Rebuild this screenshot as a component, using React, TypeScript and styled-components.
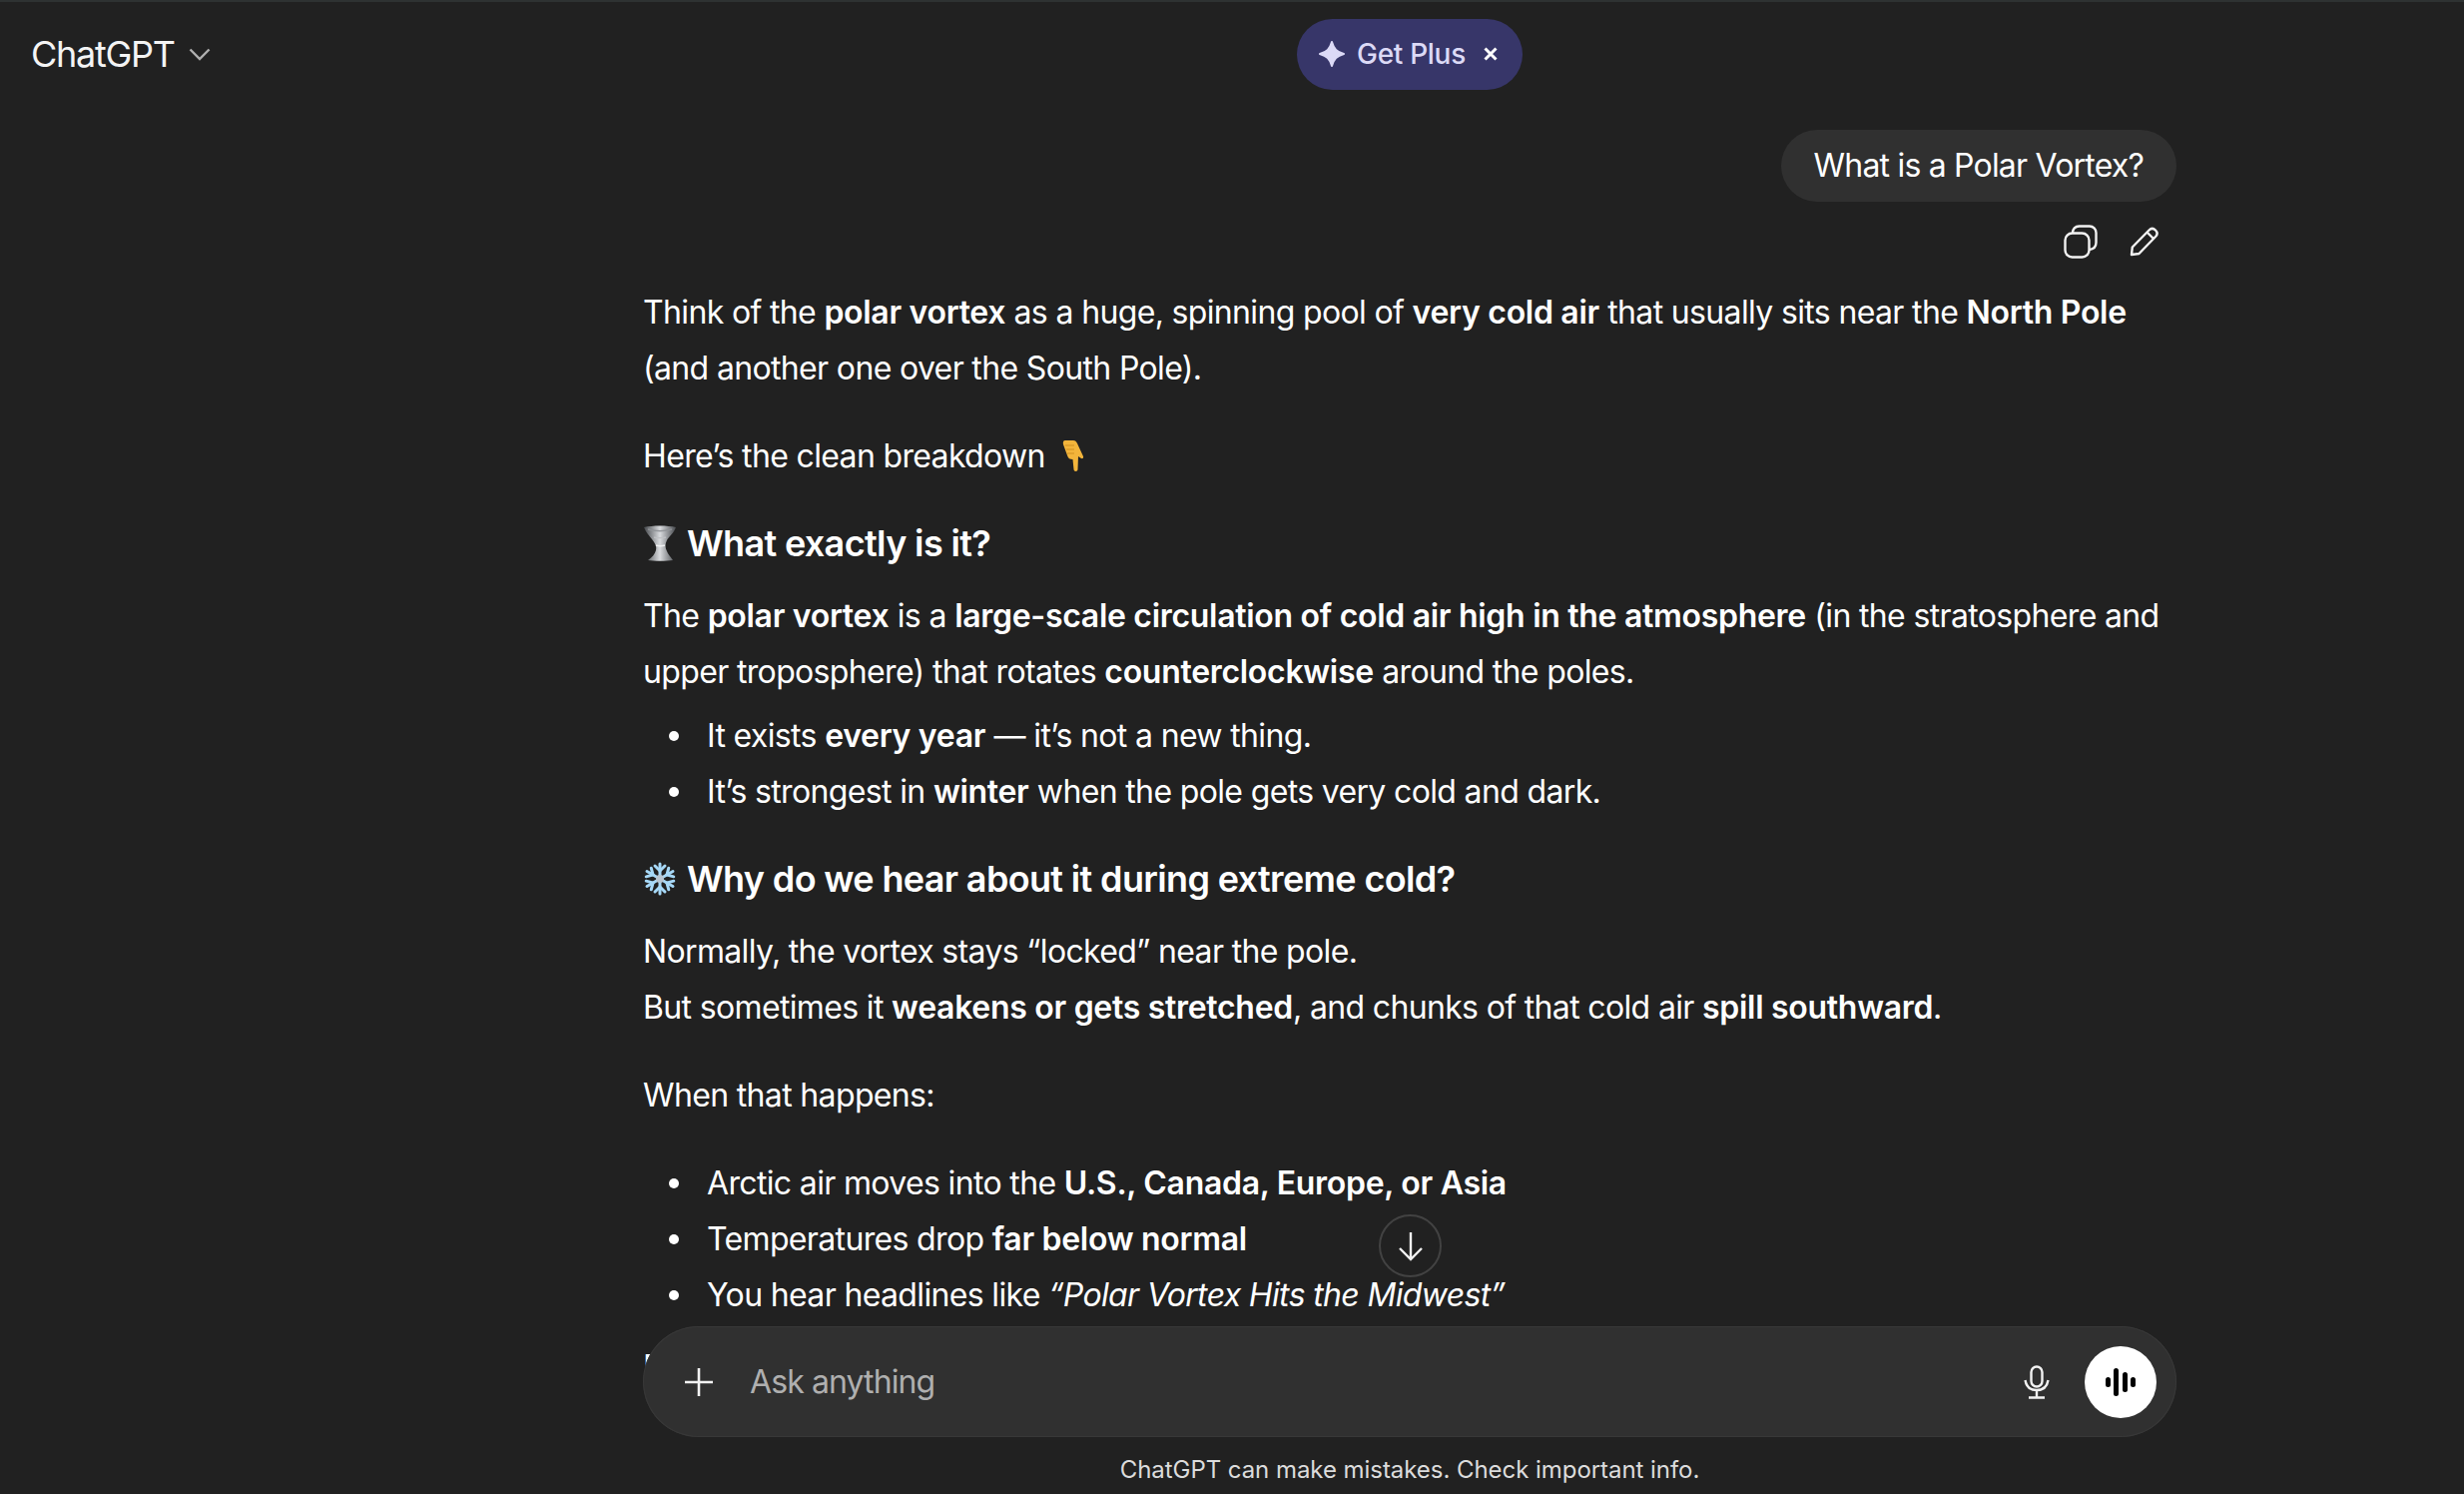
import styled, { createGlobalStyle } from "styled-components";

const Global = createGlobalStyle`
  html, body {
    margin: 0;
    padding: 0;
    background: #212121;
  }
  body {
    font-family: Inter, "Liberation Sans", sans-serif;
    color: #fff;
  }
  b {
    font-weight: 600;
    letter-spacing: -0.3px;
  }
`;

const Page = styled.div`
  position: relative;
  width: 2468px;
  height: 1496px;
  overflow: hidden;
  background: #212121;
  border-top: 2px solid #2e3232;
  box-sizing: border-box;
`;

const Header = styled.header`
  display: grid;
  grid-template-columns: 644px 1536px 288px;
  align-items: center;
  height: 104px;
`;

const Brand = styled.div`
  display: flex;
  align-items: center;
  gap: 14px;
  padding-left: 31px;
  font-size: 36px;
  letter-spacing: -1.3px;
  color: #f4f4f4;
`;

const PlusPill = styled.div`
  justify-self: center;
  display: flex;
  align-items: center;
  box-sizing: border-box;
  width: 226px;
  height: 71px;
  padding-left: 22px;
  border-radius: 36px;
  background: #373669;
  color: #dcdaf6;
  font-size: 28px;
  font-weight: 500;
  letter-spacing: -0.3px;
  gap: 12px;
`;

const PillClose = styled.svg`
  margin-left: 6px;
`;

const Thread = styled.main`
  display: flex;
  flex-direction: column;
  margin: 0 288px 0 644px;
  padding-top: 24px;
  letter-spacing: -0.65px;
`;

const UserBubble = styled.div`
  align-self: flex-end;
  height: 72px;
  padding: 0 33px;
  border-radius: 36px;
  background: #303030;
  font-size: 32px;
  letter-spacing: -0.8px;
  line-height: 72px;
`;

const MessageActions = styled.div`
  display: flex;
  justify-content: flex-end;
  align-items: center;
  gap: 32px;
  height: 83px;
  padding: 0 17px 4px 0;
  box-sizing: border-box;
`;

const Para = styled.p<{ $after?: number }>`
  margin: 0 0 ${(p) => p.$after ?? 32}px;
  font-size: 32px;
  line-height: 56px;
  color: #fff;
`;

const SectionTitle = styled.h3`
  display: flex;
  align-items: center;
  gap: 10px;
  margin: -1px 0 17px;
  font-size: 36px;
  line-height: 56px;
  font-weight: 600;
`;

const List = styled.ul<{ $after?: number }>`
  margin: 0 0 ${(p) => p.$after ?? 32}px;
  padding: 0 0 0 64px;
  list-style: none;
  font-size: 32px;
  line-height: 56px;
`;

const Item = styled.li`
  position: relative;

  &::before {
    content: "";
    position: absolute;
    left: -38px;
    top: 23px;
    width: 10px;
    height: 10px;
    border-radius: 50%;
    background: #fff;
  }
`;

const Emoji = styled.svg`
  flex: none;
`;

const InlineEmoji = styled.svg`
  margin-left: 17px;
  vertical-align: -5px;
`;

const ScrollDown = styled.button`
  position: absolute;
  left: 1381px;
  top: 1214px;
  display: flex;
  align-items: center;
  justify-content: center;
  width: 63px;
  height: 63px;
  padding: 0;
  border: 2px solid #424242;
  border-radius: 50%;
  background: #212121;
`;

const Dock = styled.div`
  position: absolute;
  left: 0;
  right: 0;
  bottom: 0;
  height: 168px;
  padding: 0 288px 0 644px;
  box-sizing: border-box;
  background: linear-gradient(#21212100 0, #21212100 60px, #212121 61px);
`;

const Composer = styled.div`
  display: flex;
  align-items: center;
  box-sizing: border-box;
  height: 111px;
  padding: 0 20px 0 41px;
  border-radius: 56px;
  background: #303030;
  box-shadow: inset 0 0 0 1px #383838;
`;

const Placeholder = styled.span`
  flex: 1;
  margin-left: 36px;
  font-size: 32px;
  letter-spacing: -0.9px;
  color: #afafaf;
`;

const VoiceButton = styled.div`
  display: flex;
  align-items: center;
  justify-content: center;
  width: 72px;
  height: 72px;
  margin-left: 35px;
  border-radius: 50%;
  background: #fff;
`;

const Disclaimer = styled.div`
  height: 57px;
  line-height: 66px;
  text-align: center;
  font-size: 24px;
  letter-spacing: -0.05px;
  color: #dcdcdc;
`;

const HandDown = () => (
  <InlineEmoji width="22" height="32" viewBox="0 0 22 32">
    <path
      d="M3 0h8c2 0 3 1 4 3l6 13c.5 1.500-.5 2.500-2 2l-3-2-.5 13c0 2.500-4 2.500-4 0l-1-10c-3 0-4.500-1-5.500-4L1 4C.5 2 1 0 3 0z"
      fill="#f3b53b"
    />
    <path d="M3 5h9M4 9h8M5 13h7" stroke="#cf8f22" strokeWidth="1.200" fill="none" />
  </InlineEmoji>
);

const Tornado = () => (
  <Emoji width="34" height="36" viewBox="0 0 34 36">
    <defs>
      <linearGradient id="tw" x1="0" x2="1" y1="0" y2="0">
        <stop offset="0" stopColor="#44474b" />
        <stop offset="0.5" stopColor="#d9dbde" />
        <stop offset="1" stopColor="#484b4f" />
      </linearGradient>
      <linearGradient id="tb" x1="0" x2="0" y1="0" y2="1">
        <stop offset="0" stopColor="#8b8e92" />
        <stop offset="1" stopColor="#f3f4f5" />
      </linearGradient>
    </defs>
    <path
      d="M1 2c8-2 24-2 32 0-2 6-7 9-9 13-2 4-2 7 0 11 1 3 4 6 6 9-6 1-20 1-25 0 4-3 7-6 8-10 1-4-1-7-4-11C6 10 3 7 1 2z"
      fill="url(#tw)"
    />
    <path d="M5 4c7 2 17 2 24 0M11 12c4 1 8 1 12 0M13 20c3 1 6 1 9 0" stroke="url(#tb)" strokeWidth="1.600" fill="none" />
  </Emoji>
);

const Snowflake = () => (
  <Emoji width="34" height="34" viewBox="0 0 34 34">
    <g stroke="#a6d8f7" strokeWidth="3" strokeLinecap="round" fill="none">
      {[0, 60, 120].map((a) => (
        <g key={a} transform={`rotate(${a} 17 17)`}>
          <path d="M17 2v30" />
          <path d="M12 4l5 5 5-5M12 30l5-5 5 5" />
        </g>
      ))}
    </g>
    <circle cx="17" cy="17" r="4" fill="#b9c6d2" />
  </Emoji>
);

export default function App() {
  return (
    <>
      <Global />
      <Page>
        <Header>
          <Brand>
            ChatGPT
            <svg width="22" height="13" viewBox="0 0 22 13">
              <path d="M1.500 1.500 11 11l9.500-9.500" stroke="#afafaf" strokeWidth="2.400" fill="none" />
            </svg>
          </Brand>
          <PlusPill>
            <svg width="26" height="26" viewBox="0 0 26 26">
              <path
                d="M13 1c2 7 5 10 12 12-7 2-10 5-12 12-2-7-5-10-12-12 7-2 10-5 12-12z"
                fill="#dcdaf6"
                stroke="#dcdaf6"
                strokeWidth="2"
                strokeLinejoin="round"
              />
            </svg>
            Get Plus
            <PillClose width="14" height="14" viewBox="0 0 14 14">
              <path d="M1.500 1.500l11 11M12.500 1.500l-11 11" stroke="#fff" strokeWidth="3" />
            </PillClose>
          </PlusPill>
        </Header>
        <Thread>
          <UserBubble>What is a Polar Vortex?</UserBubble>
          <MessageActions>
            <svg width="34" height="34" viewBox="0 0 34 34" fill="none" stroke="#f2f2f2" strokeWidth="2.400">
              <rect x="1.500" y="8.500" width="24" height="24" rx="7" />
              <path d="M9 8.500V8c0-3.500 2.500-6.500 6.500-6.500H26c3.500 0 6.500 3 6.500 6.500v10c0 4-2.500 6.500-7 7" />
            </svg>
            <svg width="30" height="30" viewBox="0 0 30 30" fill="none" stroke="#f2f2f2" strokeWidth="2.400" strokeLinejoin="round">
              <path d="M2 28l.8-7.500L19.500 3.500c2-2 4.500-2 6.500 0s2 4.500 0 6.500L9.500 27z" />
              <path d="M17.500 5.500l7 7" />
            </svg>
          </MessageActions>
          <Para>
            Think of the <b>polar vortex</b> as a huge, spinning pool of <b>very cold air</b> that usually sits near the <b>North Pole</b> (and another one over the South Pole).
          </Para>
          <Para>
            Here’s the clean breakdown
            <HandDown />
          </Para>
          <SectionTitle>
            <Tornado />
            What exactly is it?
          </SectionTitle>
          <Para $after={8}>
            The <b>polar vortex</b> is a <b>large-scale circulation of cold air high in the atmosphere</b> (in the stratosphere and upper troposphere) that rotates <b>counterclockwise</b> around the poles.
          </Para>
          <List>
            <Item>It exists <b>every year</b> — it’s not a new thing.</Item>
            <Item>It’s strongest in <b>winter</b> when the pole gets very cold and dark.</Item>
          </List>
          <SectionTitle>
            <Snowflake />
            Why do we hear about it during extreme cold?
          </SectionTitle>
          <Para>
            Normally, the vortex stays “locked” near the pole.
            <br />
            But sometimes it <b>weakens or gets stretched</b>, and chunks of that cold air <b>spill southward</b>.
          </Para>
          <Para>When that happens:</Para>
          <List $after={16}>
            <Item>Arctic air moves into the <b>U.S., Canada, Europe, or Asia</b></Item>
            <Item>Temperatures drop <b>far below normal</b></Item>
            <Item>You hear headlines like <i>“Polar Vortex Hits the Midwest”</i></Item>
          </List>
          <Para>But the vortex itself stays up high.</Para>
        </Thread>
        <ScrollDown>
          <svg width="28" height="30" viewBox="0 0 28 30" fill="none" stroke="#f2f2f2" strokeWidth="2.400">
            <path d="M14 1v27M3 17l11 11 11-11" />
          </svg>
        </ScrollDown>
        <Dock>
          <Composer>
            <svg width="30" height="30" viewBox="0 0 30 30" fill="none" stroke="#f2f2f2" strokeWidth="2.600">
              <path d="M15 1v28M1 15h28" />
            </svg>
            <Placeholder>Ask anything</Placeholder>
            <svg width="26" height="34" viewBox="0 0 26 34" fill="none" stroke="#f2f2f2" strokeWidth="2.400">
              <rect x="7.500" y="1.500" width="11" height="20" rx="5.500" />
              <path d="M1.500 15c1 6 5 10 11.500 10s10.500-4 11.500-10M13 25v7M5 32.500h16" />
            </svg>
            <VoiceButton>
              <svg width="30" height="28" viewBox="0 0 30 28" fill="#000">
                <rect x="0" y="9" width="5" height="10" rx="2.500" />
                <rect x="8" y="0" width="5" height="28" rx="2.500" />
                <rect x="17" y="4" width="5" height="20" rx="2.500" />
                <rect x="25" y="9" width="5" height="10" rx="2.500" />
              </svg>
            </VoiceButton>
          </Composer>
          <Disclaimer>ChatGPT can make mistakes. Check important info.</Disclaimer>
        </Dock>
      </Page>
    </>
  );
}
